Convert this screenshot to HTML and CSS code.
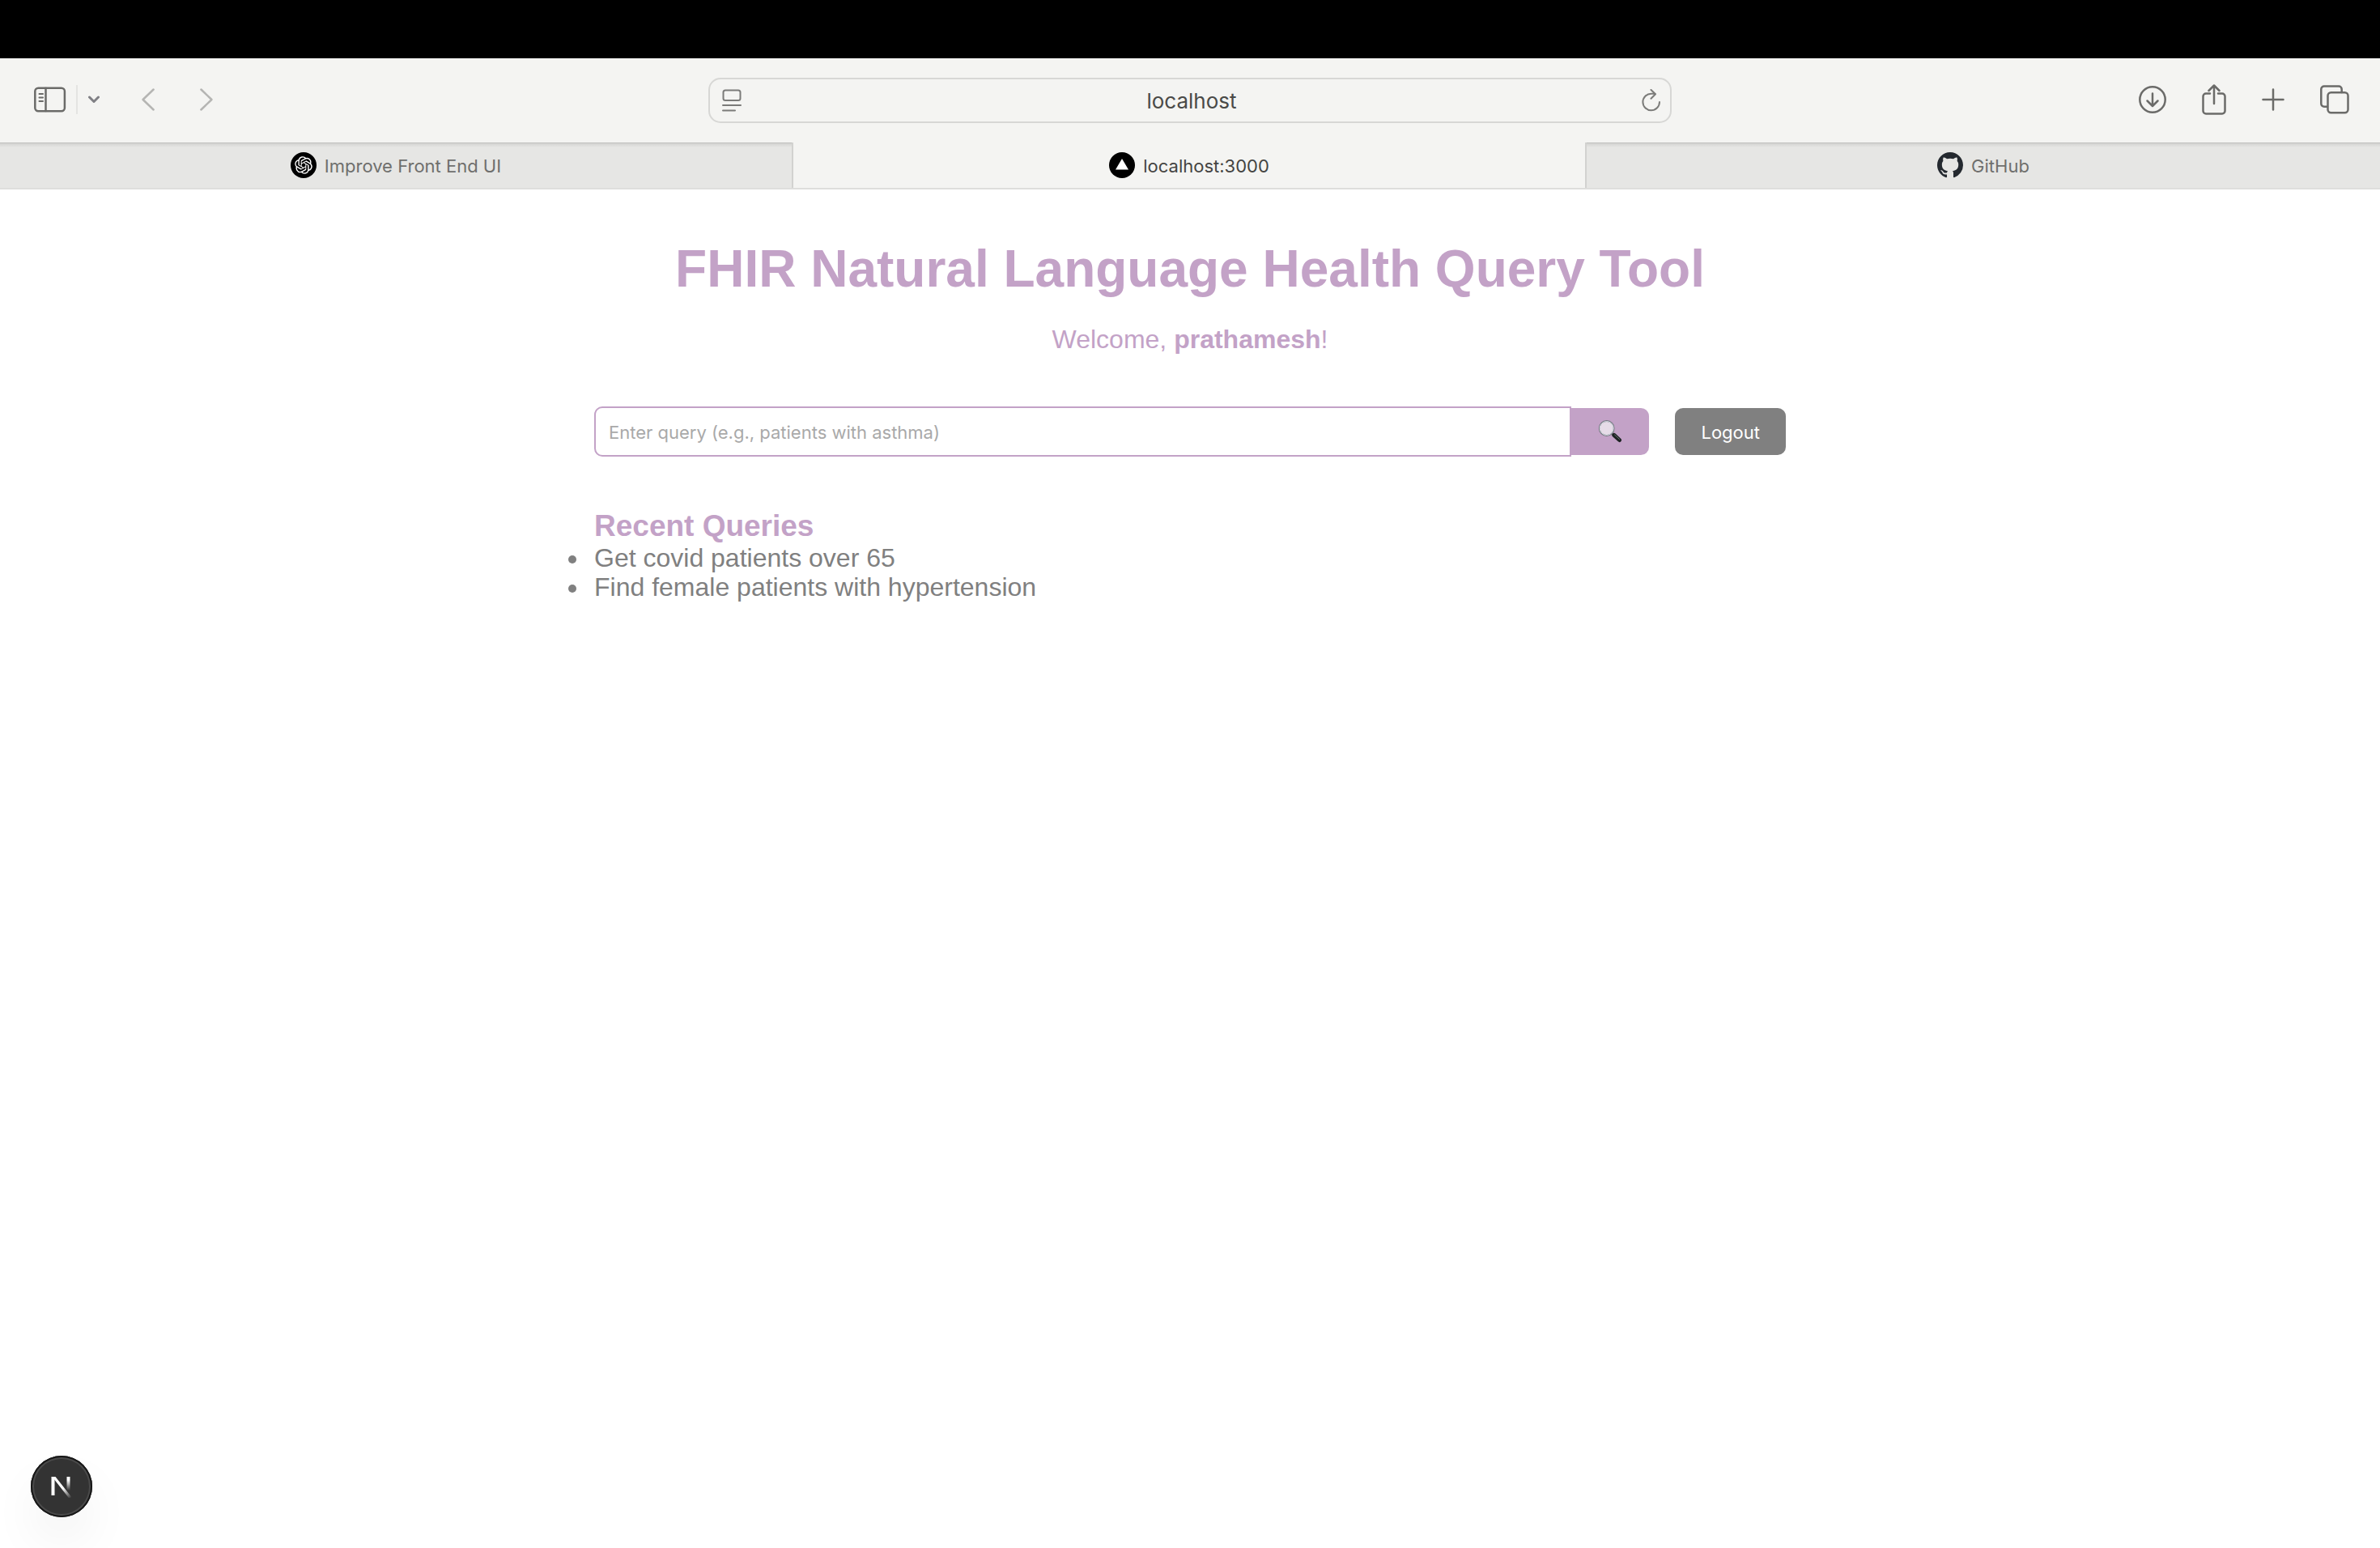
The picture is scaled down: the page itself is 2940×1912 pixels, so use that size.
FILE: index.html
```html
<!DOCTYPE html>
<html lang="en">
<head>
<meta charset="utf-8">
<title>localhost:3000</title>
<link rel="stylesheet" href="styles.css">
</head>
<body>
<div class="menu-strip"></div>
<header class="toolbar">
  <div class="tools tools-left">
    <button class="tool" type="button" aria-label="Show sidebar">
      <svg width="40" height="32" viewBox="0 0 40 32"><rect x="1.3" y="1.8" width="36.6" height="28.4" rx="4"/><path d="M14.5 2v28"/><path class="fine" d="M6.5 9h4.500M6.500 13.500h4.500M6.500 18h4.500"/></svg>
    </button>
    <span class="divider"></span>
    <button class="tool tool-menu" type="button" aria-label="Tab groups">
      <svg class="chevron" width="14" height="10" viewBox="0 0 14 10"><path d="M1.500 2l5.500 5.500L12.500 2"/></svg>
    </button>
    <button class="tool tool-back" type="button" aria-label="Back" disabled>
      <svg width="16" height="28" viewBox="0 0 16 28"><path d="M14.600 1.500L1.600 14l13 12.500"/></svg>
    </button>
    <button class="tool tool-forward" type="button" aria-label="Forward" disabled>
      <svg width="16" height="28" viewBox="0 0 16 28"><path d="M1.400 1.500l13 12.500l-13 12.500"/></svg>
    </button>
  </div>
  <div class="address">
    <button class="tool" type="button" aria-label="Page menu">
      <svg class="soft" width="24" height="28" viewBox="0 0 24 28"><rect x="1.500" y="1.500" width="21" height="12.500" rx="2.500"/><path d="M1 20h22M1 26.500h15"/></svg>
    </button>
    <input class="address-input" type="text" value="localhost" aria-label="Address">
    <button class="tool" type="button" aria-label="Reload">
      <svg class="soft" width="24" height="28" viewBox="0 0 24 28"><path d="M22 16a10.300 10.300 0 1 1-10.300-10.300h5M11.500 1l5.500 5.200l-5.500 5.500"/></svg>
    </button>
  </div>
  <div class="tools tools-right">
    <button class="tool" type="button" aria-label="Downloads">
      <svg width="34" height="34" viewBox="0 0 34 34"><circle cx="17" cy="17" r="15.700"/><path d="M17 9.500v15M10.500 18.500l6.500 6.500l6.500-6.500"/></svg>
    </button>
    <button class="tool" type="button" aria-label="Share">
      <svg width="30" height="38" viewBox="0 0 30 38"><path d="M10 11.500H5a3.500 3.500 0 0 0-3.500 3.500v18a3.500 3.500 0 0 0 3.500 3.500h20a3.500 3.500 0 0 0 3.500-3.500V15a3.500 3.500 0 0 0-3.500-3.500h-5M15 2v22M8.500 8L15 1.500L21.500 8"/></svg>
    </button>
    <button class="tool" type="button" aria-label="New tab">
      <svg class="plus" width="28" height="28" viewBox="0 0 28 28"><path d="M14 1.500v25M1.500 14h25"/></svg>
    </button>
    <button class="tool" type="button" aria-label="Tab overview">
      <svg width="36" height="36" viewBox="0 0 36 36"><rect x="9.500" y="9.300" width="25" height="25" rx="4"/><path d="M9 26.700H5A3.700 3.700 0 0 1 1.300 23V5.300A3.700 3.700 0 0 1 5 1.600h18a3.700 3.700 0 0 1 3.700 3.700V9"/></svg>
    </button>
  </div>
</header>
<nav class="tabs" aria-label="Tabs">
  <a class="tab" href="#">
    <svg width="32" height="32" viewBox="0 0 32 32"><circle cx="16" cy="16" r="16" fill="#000"/><path fill="#fff" transform="translate(5.200 5.200) scale(.9)" d="M22.282 9.821a5.985 5.985 0 0 0-.516-4.910 6.046 6.046 0 0 0-6.510-2.900A6.065 6.065 0 0 0 4.981 4.182a5.985 5.985 0 0 0-3.998 2.900 6.046 6.046 0 0 0 .743 7.097 5.980 5.980 0 0 0 .511 4.911 6.051 6.051 0 0 0 6.515 2.900A5.985 5.985 0 0 0 13.260 24a6.056 6.056 0 0 0 5.772-4.206 5.990 5.990 0 0 0 3.998-2.900 6.056 6.056 0 0 0-.748-7.073zM13.260 22.430a4.476 4.476 0 0 1-2.876-1.041l.142-.080 4.778-2.758a.795.795 0 0 0 .393-.681v-6.737l2.020 1.169a.071.071 0 0 1 .038.052v5.583a4.504 4.504 0 0 1-4.495 4.493zM3.600 18.304a4.471 4.471 0 0 1-.535-3.014l.142.085 4.783 2.759a.771.771 0 0 0 .780 0l5.843-3.369v2.332a.080.080 0 0 1-.033.062L9.740 19.950a4.500 4.500 0 0 1-6.140-1.646zM2.341 7.896a4.485 4.485 0 0 1 2.365-1.973V11.600a.766.766 0 0 0 .388.677l5.815 3.354-2.020 1.169a.076.076 0 0 1-.071 0l-4.830-2.787A4.504 4.504 0 0 1 2.341 7.872zm16.597 3.856l-5.834-3.388L15.119 7.200a.076.076 0 0 1 .071 0l4.830 2.791a4.494 4.494 0 0 1-.676 8.105v-5.678a.790.790 0 0 0-.406-.666zm2.010-3.024l-.142-.085-4.773-2.782a.776.776 0 0 0-.786 0L9.409 9.230V6.897a.066.066 0 0 1 .028-.061l4.830-2.787a4.500 4.500 0 0 1 6.681 4.660zM8.307 12.863l-2.020-1.164a.080.080 0 0 1-.038-.057V6.075a4.500 4.500 0 0 1 7.376-3.454l-.142.081L8.704 5.460a.795.795 0 0 0-.392.681zm1.097-2.366l2.602-1.500 2.607 1.500v2.999l-2.597 1.500-2.607-1.500z"/></svg>
    <span class="tab-name">Improve Front End UI</span>
  </a>
  <a class="tab tab-current" href="#" aria-current="page">
    <svg width="32" height="32" viewBox="0 0 32 32"><circle cx="16" cy="16" r="16" fill="#000"/><path fill="#fff" d="M16 8l8 13.500H8z"/></svg>
    <span class="tab-name">localhost:3000</span>
  </a>
  <a class="tab" href="#">
    <svg width="32" height="32" viewBox="0 0 16 16"><path fill="#24292f" d="M8 0C3.580 0 0 3.580 0 8c0 3.540 2.290 6.530 5.470 7.590.4.070.550-.170.550-.380 0-.190-.010-.820-.010-1.490-2.010.370-2.530-.490-2.690-.940-.090-.230-.480-.940-.820-1.130-.280-.150-.680-.520-.010-.530.630-.010 1.080.580 1.230.820.720 1.210 1.870.870 2.330.660.070-.520.280-.870.510-1.070-1.780-.2-3.640-.890-3.640-3.950 0-.870.310-1.590.820-2.150-.080-.2-.360-1.020.080-2.120 0 0 .670-.210 2.200.820.640-.180 1.320-.270 2-.270s1.360.090 2 .270c1.530-1.040 2.200-.820 2.200-.820.440 1.100.160 1.920.080 2.120.510.560.820 1.270.820 2.150 0 3.070-1.870 3.750-3.650 3.950.290.250.540.730.540 1.480 0 1.070-.010 1.930-.010 2.200 0 .210.150.460.550.380A8.013 8.013 0 0 0 16 8c0-4.420-3.580-8-8-8z"/></svg>
    <span class="tab-name">GitHub</span>
  </a>
</nav>
<main class="page">
  <h1 class="title">FHIR Natural Language Health Query Tool</h1>
  <p class="welcome">Welcome, <strong>prathamesh</strong>!</p>
  <form class="search">
    <input class="query" type="text" placeholder="Enter query (e.g., patients with asthma)" aria-label="Query">
    <button class="submit" type="submit" aria-label="Search">
      <svg width="30" height="30" viewBox="0 0 30 30">
        <path d="M17 17.500l3 3" stroke="#8d8d95" stroke-width="2.500"/>
        <path d="M19.800 19.300l6.700 6.200" stroke="#1c2222" stroke-width="5" stroke-linecap="round"/>
        <path d="M20.500 19l6 5.500" stroke="#6c7475" stroke-width="1" stroke-linecap="round"/>
        <circle cx="10.700" cy="11" r="9" fill="#e6dce8" stroke="#74777f" stroke-width="1.800"/>
        <circle cx="10.700" cy="11" r="8.500" fill="none" stroke="#d5dbe4" stroke-width="1"/>
      </svg>
    </button>
    <button class="logout" type="button">Logout</button>
  </form>
  <section>
    <h2 class="recent-title">Recent Queries</h2>
    <ul class="recent">
      <li>Get covid patients over 65</li>
      <li>Find female patients with hypertension</li>
    </ul>
  </section>
</main>
<button class="dev-badge" type="button" aria-label="Open Next.js dev tools">
  <svg width="28" height="28" viewBox="0 0 28 28">
    <defs>
      <linearGradient id="diagonal" gradientUnits="userSpaceOnUse" x1="16" y1="16" x2="26" y2="28"><stop stop-color="#fff"/><stop offset="1" stop-color="#fff" stop-opacity="0"/></linearGradient>
      <linearGradient id="stem" gradientUnits="userSpaceOnUse" x1="0" y1="6" x2="0" y2="19"><stop stop-color="#fff"/><stop offset="1" stop-color="#fff" stop-opacity="0"/></linearGradient>
    </defs>
    <path d="M3.500 25V2" stroke="#fff" stroke-width="4"/>
    <path d="M1.500 2H6.500L26.500 27.200L23.800 29.200L4 4z" fill="url(#diagonal)"/>
    <path d="M22.500 2v17" stroke="url(#stem)" stroke-width="4"/>
  </svg>
</button>
</body>
</html>
```

FILE: styles.css
```css
* {
  box-sizing: border-box;
}

:root {
  --lilac: #c3a2c7;
  --grey: #808080;
  --chrome: #f4f4f2;
  --ui: Inter, "Liberation Sans", sans-serif;
}

body {
  margin: 0;
  min-height: 100vh;
  background: #fff;
  color: var(--grey);
  font: 32px/36px "Liberation Sans", Arial, sans-serif;
}

button {
  font-family: var(--ui);
  border: 0;
}

.menu-strip {
  height: 72px;
  background: #000;
}

/* Toolbar */

.toolbar {
  display: grid;
  grid-template-columns: 1fr 1190px 1fr;
  align-items: center;
  height: 104px;
  background: var(--chrome);
}

.tools {
  display: flex;
  align-items: center;
  padding-bottom: 2px;
}

.tools-left {
  padding-left: 42px;
}

.tools-right {
  justify-content: flex-end;
  gap: 44px;
  padding-right: 38px;
}

.tool {
  display: flex;
  padding: 0;
  background: none;
}

.tool svg {
  fill: none;
  stroke: #6b6b69;
  stroke-width: 2.5;
  stroke-linecap: round;
  stroke-linejoin: round;
}

.tool .fine {
  stroke-width: 2;
}

.tool .soft {
  stroke: #7b7b79;
  stroke-width: 2;
}

.tool .chevron {
  stroke: #808085;
  stroke-width: 3;
}

.tool:disabled svg {
  stroke: #b5b5b3;
}

.divider {
  width: 2px;
  height: 36px;
  margin: 0 13px 0 12px;
  background: #e4e4e2;
}

.tool-back {
  margin-left: 52px;
}

.tool-forward {
  margin-left: 56px;
}

.address {
  display: flex;
  align-items: center;
  height: 56px;
  padding: 0 11px 0 15px;
  border: 2px solid #d7d7d5;
  border-radius: 15px;
}

.address-input {
  flex: 1;
  min-width: 0;
  padding: 2px 0 0;
  border: 0;
  background: none;
  color: #4a4a48;
  font: 26px/32px var(--ui);
  text-align: center;
}

/* Tabs */

.tabs {
  display: grid;
  grid-template-columns: repeat(3, 1fr);
  height: 58px;
  border-bottom: 2px solid #dededc;
}

.tab {
  display: flex;
  align-items: center;
  justify-content: center;
  gap: 10px;
  border-right: 2px solid #d2d2d0;
  background: linear-gradient(#bfbfbd 1px, #d3d3d1 1px, #e6e6e4 6px);
  color: #6f6f6d;
  font: 22px/28px var(--ui);
  text-decoration: none;
}

.tab:last-child {
  border-right: 0;
}

.tab-current {
  background: var(--chrome);
  color: #444442;
}

.tab-name {
  padding-top: 2px;
}

/* Page */

.page {
  max-width: 1472px;
  margin: 0 auto;
  padding-top: 61px;
}

.title {
  margin: 0 0 32px;
  color: var(--lilac);
  font-size: 64px;
  line-height: 74px;
  text-align: center;
}

.welcome {
  margin: 0 0 65px;
  color: var(--lilac);
  text-align: center;
}

.search {
  display: flex;
  align-items: center;
  margin-bottom: 64px;
}

.query {
  flex: 1;
  min-width: 0;
  height: 62px;
  padding: 2px 16px 0;
  border: 2px solid var(--lilac);
  border-radius: 10px 0 0 10px;
  background: #fff;
  font: 22px/28px var(--ui);
}

.query::placeholder {
  color: #a9a9a9;
}

.submit,
.logout {
  display: flex;
  align-items: center;
  justify-content: center;
  height: 58px;
}

.submit {
  padding: 0 33px;
  border-radius: 0 10px 10px 0;
  background: var(--lilac);
}

.logout {
  margin-left: 32px;
  padding: 2px 32px 0;
  border-radius: 10px;
  background: var(--grey);
  color: #fff;
  font-size: 22px;
}

.recent-title {
  margin: 0;
  color: var(--lilac);
  font-size: 37px;
  line-height: 43px;
}

.recent {
  margin: 0 0 0 -6px;
  padding: 0;
}

.recent li {
  padding-left: 6px;
}

.dev-badge {
  position: fixed;
  bottom: 38px;
  left: 38px;
  display: flex;
  align-items: center;
  justify-content: center;
  width: 76px;
  height: 76px;
  padding: 0;
  border-radius: 50%;
  background: #333;
  box-shadow: inset 0 0 0 2px #171717, inset 0 0 0 4px #4a4a4a, 0 32px 64px -8px rgba(0, 0, 0, 0.08);
}
```
